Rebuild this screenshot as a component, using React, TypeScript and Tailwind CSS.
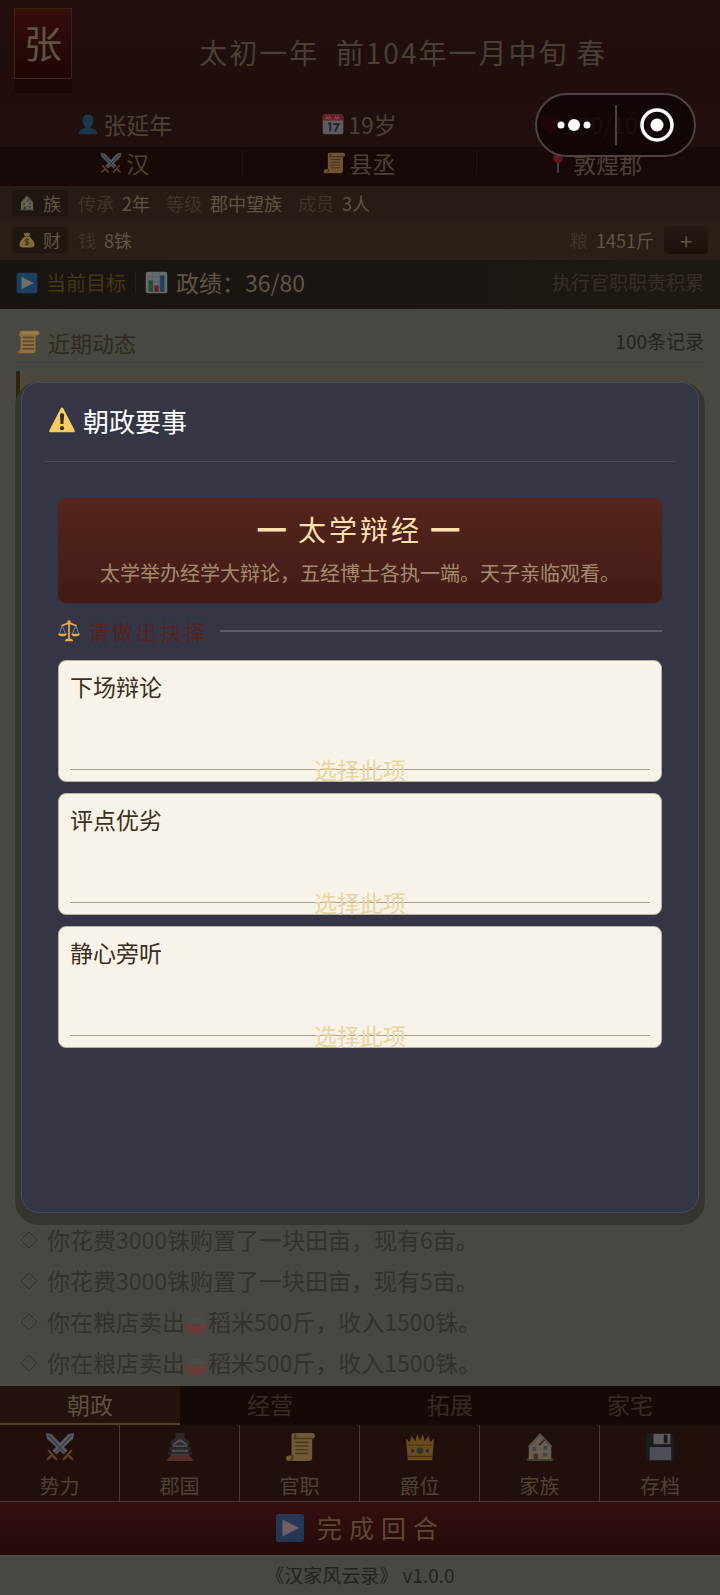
import type { ReactNode } from "react";
import clsx from "clsx";

type IconProps = { className?: string };

const Svg = ({ className, children }: IconProps & { children: ReactNode }) => (
  <svg viewBox="0 0 32 32" className={clsx("shrink-0", className)} aria-hidden="true">
    {children}
  </svg>
);

const PersonIcon = ({ className }: IconProps) => (
  <Svg className={className}>
    <path fill="#1b6fb0" d="M16 2c-5 0-8 4-8 9 0 4 2 7 4 9v2c-3 1-9 2-10 9h28c-1-7-7-8-10-9v-2c2-2 4-5 4-9 0-5-3-9-8-9z" />
  </Svg>
);

const CalendarIcon = ({ className }: IconProps) => (
  <Svg className={className}>
    <rect x="1" y="2" width="30" height="29" rx="3" fill="#bccfd9" />
    <path fill="#d8304a" d="M1 11V5a3 3 0 0 1 3-3h24a3 3 0 0 1 3 3v6z" />
    <path stroke="#f2a0a8" strokeWidth="1.5" d="M5 9l2-4 2 4 2-4 2 4M18 9l2-4 2 4 2-4 2 4" fill="none" />
    <path stroke="#2c4a5c" strokeWidth="3" fill="none" d="M9 16l3-1v12M16 16h8l-5 11" />
  </Svg>
);

const SwordsIcon = ({ className }: IconProps) => (
  <Svg className={className}>
    <path fill="#9fc3dc" d="M1 1l6 1 17 18-4 4L2 7z" />
    <path fill="#b3d0e2" d="M31 1l-6 1L8 20l4 4L30 7z" />
    <path stroke="#5e7f98" strokeWidth="1.5" d="M3 3l18 19M29 3L11 22" />
    <path stroke="#c58a3e" strokeWidth="2.500" strokeLinecap="round" fill="none" d="M4 20l8 9M28 20l-8 9M8 24l-5 5M24 24l5 5" />
  </Svg>
);

const ScrollIcon = ({ className }: IconProps) => (
  <Svg className={className}>
    <path fill="#e6c878" d="M9 1h20c4 0 4 6 0 6v20c0 3-2 4-4 4H4c-4 0-4-6 0-6h3V4c0-2 1-3 2-3z" />
    <path stroke="#8f7136" strokeWidth="1.6" fill="none" d="M11 11h14M11 15h14M11 19h14M11 23h14M7 25c2 0 2 5-2 5M10 2c2 1 2 4-1 5h20" />
  </Svg>
);

const OrangeScrollIcon = ({ className }: IconProps) => (
  <Svg className={className}>
    <path fill="#d9a13b" d="M6 3c-1-2 1-3 3-2h20c3 1 3 5 0 6l-3 1v20c0 2-2 3-4 3H2l4-5V8C3 8 4 5 6 3z" />
    <path stroke="#7d4c1d" strokeWidth="2.6" d="M9 10h15M9 15h15M9 20h15M9 25h15" />
    <path stroke="#f0c56c" strokeWidth="1.5" d="M9 4h19" />
    <circle cx="3" cy="29" r="2" fill="#a96f25" />
  </Svg>
);

const HeartIcon = ({ className }: IconProps) => (
  <Svg className={className}>
    <path fill="#b3122f" d="M16 30C9 24 1 18 1 10c0-8 11-10 15-3 4-7 15-5 15 3 0 8-8 14-15 20z" />
  </Svg>
);

const PinIcon = ({ className }: IconProps) => (
  <Svg className={className}>
    <path stroke="#7c97a8" strokeWidth="3" d="M16 13v17" />
    <circle cx="16" cy="9" r="7" fill="#c32a48" />
    <circle cx="14" cy="7" r="2" fill="#d64a64" />
  </Svg>
);

const HouseIcon = ({ className }: IconProps) => (
  <Svg className={className}>
    <path fill="#4d8a55" d="M2 28h28v3H2z" />
    <path fill="#d9d2b0" d="M4 15L16 3l12 12v14H4z" />
    <path stroke="#9fb3b0" strokeWidth="2.500" fill="none" d="M4 16L16 3l6 6 6 7" />
    <path stroke="#4f5653" strokeWidth="2" d="M15 14l6-6" />
    <path fill="#5d9aa8" d="M8 16h4v4H8zM20 15h4v4h-4zM19 22h5v4h-5z" />
    <path fill="#8e5d40" d="M9 23h5v6H9z" />
  </Svg>
);

const MoneyBagIcon = ({ className }: IconProps) => (
  <Svg className={className}>
    <path fill="#e3c063" d="M9 1l4 2 3-2 3 2 4-2-3 8c6 4 11 10 11 16 0 4-3 6-7 6H8c-4 0-7-2-7-6C1 19 6 13 12 9z" />
    <path stroke="#9c7326" strokeWidth="2" d="M11 9h10" />
    <path stroke="#594313" strokeWidth="2" fill="none" d="M20 16c-2-2-8-2-8 1 0 4 8 2 8 6 0 3-6 3-8 1M16 13v14" />
  </Svg>
);

const PlayIcon = ({ className }: IconProps) => (
  <Svg className={className}>
    <rect x="1" y="1" width="30" height="30" rx="3" fill="#1f74c4" />
    <path fill="#d3dce4" d="M8 7l18 9-18 9z" />
  </Svg>
);

const ChartIcon = ({ className }: IconProps) => (
  <Svg className={className}>
    <rect x="1" y="1" width="30" height="30" rx="3" fill="#c5d3dc" />
    <path stroke="#98abb8" d="M3 8h26M3 15h26M3 22h26M11 2v28M20 2v28" />
    <path fill="#2d9257" d="M5 13h6v16H5z" />
    <path fill="#c52f4a" d="M13 20h6v9h-6z" />
    <path fill="#2674b8" d="M21 6h6v23h-6z" />
  </Svg>
);

const WarningIcon = ({ className }: IconProps) => (
  <Svg className={className}>
    <path fill="#f7cd61" d="M14.5 1.5c.7-1.2 2.3-1.2 3 0l14 27c.7 1.3 0 2.5-1.5 2.5H2C.5 31-.2 29.800 .5 28.500z" />
    <path fill="#33302c" d="M13.500 10c0-3 5-3 5 0l-.7 11h-3.600z" />
    <circle cx="16" cy="26" r="2.500" fill="#33302c" />
  </Svg>
);

const ScalesIcon = ({ className }: IconProps) => (
  <Svg className={className}>
    <path stroke="#f0ab48" strokeWidth="2.500" fill="none" d="M16 3v25M5 8c4 0 6-3 11-3s7 3 11 3" />
    <path stroke="#7f9bb0" strokeWidth="1.200" fill="none" d="M6 8L2 20M6 8l5 12M26 8l-5 12M26 8l4 12" />
    <path fill="#f0ab48" d="M0 20h13c-1 5-12 5-13 0zM19 20h13c-1 5-12 5-13 0zM10 31c0-3 3-4 6-4s6 1 6 4z" />
    <circle cx="16" cy="3" r="2.500" fill="#f0ab48" />
  </Svg>
);

const CastleIcon = ({ className }: IconProps) => (
  <Svg className={className}>
    <path fill="#a55a4c" d="M6 25h20l5 6H1z" />
    <path fill="#8fa6ae" d="M9 9h14l3 16H6z" />
    <path fill="#3f525b" d="M11 1h10v5l5 4v4H6v-4l5-4zM5 16h22l1 3H4zM4 21h24l1 3H3z" />
    <path stroke="#a8bcc4" strokeWidth="2" fill="none" d="M9 13c3 0 4-4 7-4s4 4 7 4" />
  </Svg>
);

const CrownIcon = ({ className }: IconProps) => (
  <Svg className={className}>
    <path fill="#d6a638" d="M3 30L1 7l4 4 2-7 4 6 2-8 3 7 3-7 2 8 4-6 2 7 4-4-2 23z" />
    <path stroke="#9b6a14" strokeWidth="1.500" d="M3 26h26M3 14h26" />
    <circle cx="16" cy="20" r="3.500" fill="#347b46" />
    <circle cx="8" cy="20" r="2" fill="#713a80" />
    <circle cx="24" cy="20" r="2" fill="#713a80" />
  </Svg>
);

const FloppyIcon = ({ className }: IconProps) => (
  <Svg className={className}>
    <path fill="#12303f" d="M1 3a2 2 0 0 1 2-2h24l4 4v24a2 2 0 0 1-2 2H3a2 2 0 0 1-2-2z" />
    <path fill="#c0cbd0" d="M9 2h18v11H9z" />
    <path fill="#172935" d="M20 3h4v9h-4z" />
    <path fill="#90aec4" d="M5 16h23v14H5z" />
  </Svg>
);

const RiceIcon = ({ className }: IconProps) => (
  <Svg className={className}>
    <path fill="#4c5550" d="M3 16c2-7 7-9 13-9s11 2 13 9z" />
    <path fill="#8f2c34" d="M0 15c8 6 24 6 32 0-1 8-5 12-10 14l-1 2H11l-1-2C5 27 1 23 0 15z" />
  </Svg>
);

const character = [
  [
    { text: "张延年", icon: PersonIcon },
    { text: "19岁", icon: CalendarIcon },
    { text: "100/100", icon: HeartIcon },
  ],
  [
    { text: "汉", icon: SwordsIcon },
    { text: "县丞", icon: ScrollIcon },
    { text: "敦煌郡", icon: PinIcon },
  ],
];

const family = [
  { label: "传承", value: "2年" },
  { label: "等级", value: "郡中望族" },
  { label: "成员", value: "3人" },
];

const riceSale = (
  <>
    你在粮店卖出
    <RiceIcon className="inline size-[23px] align-[-4px] opacity-50" />
    稻米500斤，收入1500铢。
  </>
);

const events: ReactNode[] = [
  "你花费3000铢购置了一块田亩，现有6亩。",
  "你花费3000铢购置了一块田亩，现有5亩。",
  riceSale,
  riceSale,
];

const tabs = ["朝政", "经营", "拓展", "家宅"];

const actions = [
  { name: "势力", icon: SwordsIcon },
  { name: "郡国", icon: CastleIcon },
  { name: "官职", icon: ScrollIcon },
  { name: "爵位", icon: CrownIcon },
  { name: "家族", icon: HouseIcon },
  { name: "存档", icon: FloppyIcon },
];

const choices = ["下场辩论", "评点优劣", "静心旁听"];

const Stat = ({ label, value }: { label: string; value: string }) => (
  <p className="flex gap-2">
    <span className="text-[#3e3428]">{label}</span>
    <span className="text-[#5f5544]">{value}</span>
  </p>
);

const Header = () => (
  <header className="bg-linear-to-b from-[#220f0e] to-[#1e0d0b]">
    <div className="flex h-[108px] px-[14px] pt-2">
      <div className="flex h-[71px] w-[58px] shrink-0 items-center justify-center border border-[#3b2415] bg-linear-to-b from-[#370d0c] to-[#1d0605] pb-1 text-[38px] text-[#5f5340] shadow-[0_14px_0_0_#1a0807]">
        张
      </div>
      <h1 className="ml-7 flex-1 pt-6 text-center text-[28px] leading-10 tracking-[2px] whitespace-pre text-[#4a4032]">
        太初一年{"  "}前104年一月中旬 春
      </h1>
    </div>
    {character.map((row, index) => (
      <ul
        key={index}
        className={clsx("grid h-[39px] grid-cols-3 px-2", index === 0 ? "bg-[#210f0d]" : "bg-[#190808]")}
      >
        {row.map(({ text, icon: Icon }) => (
          <li
            key={text}
            className="mt-1 mb-[11px] flex items-center justify-center gap-1 border-r border-[#26120f] text-[23px] leading-6 text-[#4d4133] last:border-r-0"
          >
            <Icon className="size-[22px] opacity-40" />
            {text}
          </li>
        ))}
      </ul>
    ))}
  </header>
);

const Family = () => (
  <section className="text-[18px] leading-6">
    <div className="flex h-[37px] items-center gap-[10px] bg-[#261c13] px-3 pb-1">
      <h2 className="flex h-[26px] w-14 items-center justify-center gap-2 rounded bg-[#1f160f] text-[#5f5544]">
        <HouseIcon className="size-4 opacity-40" />族
      </h2>
      <div className="flex gap-4">
        {family.map((stat) => (
          <Stat key={stat.label} {...stat} />
        ))}
      </div>
    </div>
    <div className="flex h-[37px] items-center gap-[10px] bg-[#291f15] px-3 pb-1">
      <h2 className="flex h-[26px] w-14 items-center justify-center gap-2 rounded bg-[#1f160f] text-[#5f5544]">
        <MoneyBagIcon className="size-4 opacity-50" />财
      </h2>
      <Stat label="钱" value="8铢" />
      <div className="ml-auto">
        <Stat label="粮" value="1451斤" />
      </div>
      <button
        className="h-7 w-11 rounded bg-linear-to-b from-[#231911] to-[#1c110b] text-[22px] leading-6 text-[#5f5544]"
        aria-label="买粮"
      >
        +
      </button>
    </div>
  </section>
);

const Goal = () => (
  <section className="flex h-[49px] items-center bg-linear-to-r from-[#191410] to-[#1e1813] px-4 pb-1 text-[#5f5546]">
    <PlayIcon className="mr-2 size-[22px] opacity-45" />
    <h2 className="text-[20px] text-[#453616]">当前目标</h2>
    <span className="mx-[9px] h-5 w-px bg-[#2b231a]" />
    <ChartIcon className="mr-2 size-[23px] opacity-45" />
    <p className="text-[23px]">政绩：36/80</p>
    <p className="ml-auto text-[19px] text-[#372f26]">执行官职职责积累</p>
  </section>
);

const Feed = () => (
  <main className="flex flex-1 flex-col px-4 pt-3">
    <div className="flex h-[42px] items-center gap-2 border-b border-[#43403a]">
      <OrangeScrollIcon className="size-6 opacity-50" />
      <h2 className="text-[22px] leading-8 text-[#2f2a1e]">近期动态</h2>
      <p className="ml-auto text-[19px] text-[#25221d]">100条记录</p>
    </div>
    <div className="mt-2 h-14 border-l-4 border-[#30230c] bg-[#4b483e]" />
    <ul className="mt-auto pb-[3px]">
      {events.map((event, index) => (
        <li key={index} className="flex h-[41px] items-center gap-[9px] px-1 text-[23px] text-[#33302b]">
          <svg viewBox="0 0 18 18" className="size-[18px] shrink-0" aria-hidden="true">
            <path d="M9 1l8 8-8 8-8-8z" fill="none" stroke="#33302b" />
          </svg>
          <p>{event}</p>
        </li>
      ))}
    </ul>
  </main>
);

const Menu = () => (
  <footer>
    <nav className="grid h-[39px] grid-cols-4 bg-[#150908] text-[23px]">
      {tabs.map((tab, index) => (
        <button
          key={tab}
          className={clsx(
            "border-b-2",
            index === 0
              ? "border-[#55402f] bg-[#24120d] text-[#605040]"
              : "border-transparent text-[#382b24]"
          )}
        >
          {tab}
        </button>
      ))}
    </nav>
    <div className="grid h-[77px] grid-cols-6 border-b border-[#4c372c] bg-[#210f0c]">
      {actions.map(({ name, icon: Icon }) => (
        <button
          key={name}
          className="flex flex-col items-center justify-between border-r border-[#4c372c] pt-[7px] text-[20px] text-[#514132] last:border-r-0"
        >
          <Icon className="size-[30px] opacity-40" />
          {name}
        </button>
      ))}
    </div>
    <button className="flex h-[53px] w-full items-center justify-center gap-3 bg-linear-to-b from-[#330f0e] to-[#240b09] pb-[2px] text-[25px] tracking-[7px] text-[#5f4635]">
      <PlayIcon className="size-[30px] opacity-40" />
      完成回合
    </button>
    <p className="flex h-10 items-center justify-center text-[19px] whitespace-pre text-[#25221d]">
      《汉家风云录》 v1.0.0
    </p>
  </footer>
);

const EventDialog = () => (
  <div className="absolute inset-0 flex items-center justify-center px-[21px]">
    <div
      role="dialog"
      aria-labelledby="dialog-title"
      className="min-h-[831px] w-full rounded-[18px] border border-[#4b4c5f] bg-[#343645] px-[22px] shadow-[0_6px_0_6px_#373530]"
    >
      <div className="flex h-[79px] items-center gap-2 border-b border-[#484a5a] px-[5px] pb-1 text-[26px] text-white">
        <WarningIcon className="size-[26px]" />
        <h2 id="dialog-title">朝政要事</h2>
      </div>
      <div className="px-[14px] pt-9">
        <div className="flex h-[105px] flex-col items-center justify-center gap-1 rounded-lg bg-linear-to-b from-[#54251d] to-[#421b16] text-center">
          <h3 className="text-[28px] leading-10 tracking-[3px] text-[#fbdfac]">━ 太学辩经 ━</h3>
          <p className="text-[20px] leading-10 text-[#a68a70]">
            太学举办经学大辩论，五经博士各执一端。天子亲临观看。
          </p>
        </div>
        <div className="flex h-[57px] items-center gap-2 pb-[2px]">
          <ScalesIcon className="size-[22px]" />
          <h4 className="text-[21px] leading-8 tracking-[3px] text-[#56211f]">请做出抉择</h4>
          <span className="ml-1 h-[2px] flex-1 bg-[#595b68]" />
        </div>
        <div className="flex flex-col gap-[11px]">
          {choices.map((choice) => (
            <button
              key={choice}
              className="flex h-[122px] flex-col justify-between rounded-lg border border-[#b9b19c] bg-[#f8f3e8] px-[11px] pt-2 pb-[2px] text-[23px] leading-[34px]"
            >
              <span className="text-left text-[#3b2d20]">{choice}</span>
              <span className="grid h-5 items-center">
                <span className="col-start-1 row-start-1 h-px bg-[#aaa090]" />
                <span className="col-start-1 row-start-1 text-center leading-5 text-[#e9d5a2]">选择此项</span>
              </span>
            </button>
          ))}
        </div>
      </div>
    </div>
  </div>
);

const Capsule = () => (
  <div className="absolute top-[93px] right-6 flex h-16 w-[161px] items-center rounded-full border-2 border-[#4d4241] bg-[#0f0404]/80">
    <button className="flex flex-1 items-center justify-center pr-1" aria-label="更多">
      <svg viewBox="0 0 36 14" className="h-[14px] w-9" fill="#fff" aria-hidden="true">
        <circle cx="5" cy="7" r="3.500" />
        <circle cx="18" cy="7" r="6" />
        <circle cx="31" cy="7" r="3.500" />
      </svg>
    </button>
    <span className="h-10 w-[2px] bg-[#4d4241]" />
    <button className="flex flex-1 items-center justify-center pl-1" aria-label="关闭">
      <svg viewBox="0 0 34 34" className="size-[34px]" aria-hidden="true">
        <circle cx="17" cy="17" r="15" fill="none" stroke="#fff" strokeWidth="3.500" />
        <circle cx="17" cy="17" r="6.500" fill="#fff" />
      </svg>
    </button>
  </div>
);

const App = () => {
  return (
    <div className="relative flex min-h-screen flex-col bg-[#494741] font-['Noto_Sans_CJK_SC',sans-serif]">
      <Header />
      <Family />
      <Goal />
      <Feed />
      <Menu />
      <EventDialog />
      <Capsule />
    </div>
  );
};

export default App;
